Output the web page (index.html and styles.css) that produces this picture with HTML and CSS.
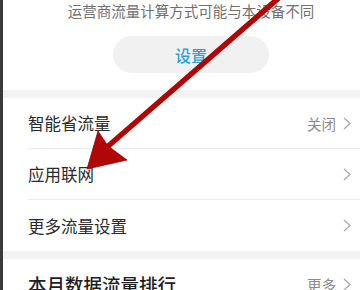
FILE: index.html
```html
<!DOCTYPE html>
<html lang="zh">
<head>
<meta charset="utf-8">
<link rel="stylesheet" href="styles.css">
</head>
<body>
<div class="page">
  <div class="edge"></div>
  <div class="content">
    <div class="top">
      <div class="note">运营商流量计算方式可能与本设备不同</div>
      <div class="btn">设置</div>
    </div>
    <div class="band"></div>
    <div class="list">
      <div class="row">
        <span class="label">智能省流量</span>
        <span class="value">关闭</span>
        <svg class="chev" width="8" height="13" viewBox="0 0 8 13"><polyline points="1,1 7,6.5 1,12" fill="none" stroke="#a8a8a8" stroke-width="1.2"/></svg>
      </div>
      <div class="row">
        <span class="label">应用联网</span>
        <svg class="chev" width="8" height="13" viewBox="0 0 8 13"><polyline points="1,1 7,6.5 1,12" fill="none" stroke="#a8a8a8" stroke-width="1.2"/></svg>
      </div>
      <div class="row last">
        <span class="label">更多流量设置</span>
        <svg class="chev" width="8" height="13" viewBox="0 0 8 13"><polyline points="1,1 7,6.5 1,12" fill="none" stroke="#a8a8a8" stroke-width="1.2"/></svg>
      </div>
    </div>
    <div class="band"></div>
    <div class="list">
      <div class="row head">
        <span class="label big">本月数据流量排行</span>
        <span class="value">更多</span>
        <svg class="chev" width="8" height="13" viewBox="0 0 8 13"><polyline points="1,1 7,6.5 1,12" fill="none" stroke="#a8a8a8" stroke-width="1.2"/></svg>
      </div>
    </div>
  </div>
  <svg class="arrow" width="360" height="290" viewBox="0 0 360 290">
    <line x1="281" y1="-4" x2="106" y2="148" stroke="#b00606" stroke-width="5.5" stroke-linecap="butt"/>
    <polygon points="87,169 98,131 108,146 127,160" fill="#b00606" stroke="#9a0303" stroke-width="0.8" stroke-linejoin="round"/>
  </svg>
</div>
</body>
</html>
```
FILE: styles.css
```css
html, body {
  margin: 0;
  padding: 0;
  background: #ffffff;
}
body {
  font-family: "Noto Sans CJK SC", "Noto Sans", sans-serif;
}
.page {
  position: relative;
  display: flex;
  width: 360px;
  height: 290px;
  overflow: hidden;
}
.edge {
  width: 3px;
  flex: none;
  background: #3a3a3a;
}
.content {
  flex: 1;
  min-width: 0;
}
.top {
  height: 90px;
  display: flex;
  flex-direction: column;
  align-items: center;
  padding-left: 19px;
  box-sizing: border-box;
}
.note {
  margin-top: 1px;
  font-size: 14.5px;
  line-height: 20px;
  color: #707070;
  white-space: nowrap;
}
.btn {
  margin-top: 15px;
  width: 156px;
  height: 37px;
  border-radius: 19px;
  background: #f1f1f1;
  color: #2aa3dd;
  font-size: 16px;
  font-weight: 500;
  display: flex;
  align-items: center;
  justify-content: center;
}
.band {
  height: 8px;
  background: #f3f3f3;
}
.list {
  padding-left: 25px;
}
.row {
  height: 50px;
  display: flex;
  align-items: center;
  border-bottom: 1px solid #ececec;
  padding-right: 9px;
}
.row.last {
  border-bottom: none;
  height: 51px;
}
.row.head {
  border-bottom: none;
  height: 50px;
}
.label {
  flex: 1;
  font-size: 16.5px;
  color: #2b2b2b;
}
.label.big {
  font-size: 18.5px;
  font-weight: 500;
  color: #1f1f1f;
}
.value {
  font-size: 14.5px;
  color: #8a8a8a;
  margin-right: 7px;
}
.chev {
  display: block;
  flex: none;
}
.arrow {
  position: absolute;
  left: 0;
  top: 0;
  pointer-events: none;
}
```
